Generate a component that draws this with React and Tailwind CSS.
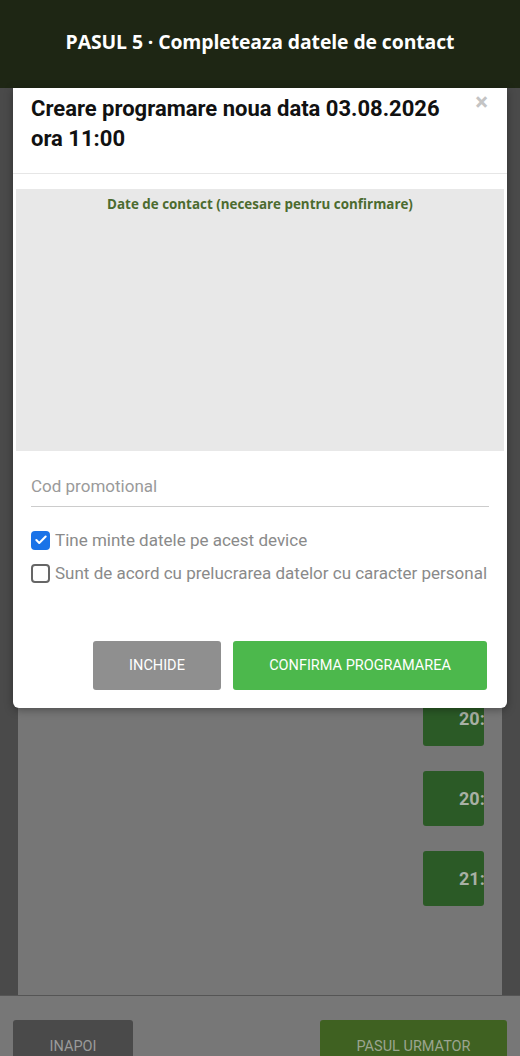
import React from "react";
import { Check } from "lucide-react";

const slots = ["20:00", "20:30", "21:00"];

const App = () => {
  return (
    <div className="relative h-[1056px] w-[520px] overflow-hidden flex flex-col bg-[#4a4a4a] font-['Roboto',sans-serif]">
      {/* Top bar */}
      <div className="h-[88px] shrink-0 bg-[#1e2614] flex items-center justify-center">
        <h1 className="text-white text-[19.4px] font-bold tracking-[-0.1px] font-['Open_Sans',sans-serif] -mt-[4px]">
          PASUL 5 · Completeaza datele de contact
        </h1>
      </div>

      {/* Page behind the dialog (dimmed) */}
      <div className="flex-1 px-[18px] bg-[#4a4a4a] flex">
        <div className="flex-1 bg-[#767676] flex flex-col items-end pr-[18px] pt-[603px] gap-[25px]">
          {slots.map((s) => (
            <div key={s} className="w-[61px] h-[55px] rounded-[3px] bg-[#2b5a26] overflow-hidden flex items-center pl-[36px]">
              <span className="text-[#a8b0a4] text-[18px] font-bold whitespace-nowrap">{s}</span>
            </div>
          ))}
        </div>
      </div>

      {/* Bottom bar */}
      <div className="h-[61px] shrink-0 bg-[#777777] border-t border-[#555555] flex items-start justify-between px-[13px] pt-[24px]">
        <div className="w-[120px] h-[45px] rounded-[3px] bg-[#4a4a4a] flex justify-center pt-[16px]">
          <span className="text-[#9a9a9a] text-[14.5px]">INAPOI</span>
        </div>
        <div className="w-[187px] h-[45px] rounded-[3px] bg-[#3f6121] flex justify-center pt-[16px]">
          <span className="text-[#9ba58f] text-[14.5px]">PASUL URMATOR</span>
        </div>
      </div>

      {/* Dialog */}
      <div className="absolute left-[13px] top-[88px] w-[494px] h-[620px] bg-white rounded-b-[6px] shadow-[0_2px_8px_rgba(0,0,0,0.35)] flex flex-col">
        <div className="relative px-[18px] pt-[6px] pb-[19px] border-b border-[#e6e6e6]">
          <h2 className="text-[#111111] text-[22px] leading-[30px] font-bold pr-[40px]">
            Creare programare noua data 03.08.2026 ora 11:00
          </h2>
          <span className="absolute right-[19px] top-[2px] text-[#c4c4c4] text-[24px] font-bold leading-[24px]">×</span>
        </div>

        <div className="mx-[3px] mt-[15px] h-[262px] bg-[#e8e8e8] flex justify-center pt-[5px]">
          <span className="text-[#4c6b2f] text-[13.4px] font-bold font-['Open_Sans',sans-serif]">
            Date de contact (necesare pentru confirmare)
          </span>
        </div>

        <div className="mx-[18px] mt-[23px] border-b border-[#cccccc] pb-[6px]">
          <span className="text-[#9a9a9a] text-[17px]">Cod promotional</span>
        </div>

        <div className="mx-[18px] mt-[21px] flex flex-col gap-[8px]">
          <label className="flex items-center gap-[5px]">
            <span className="w-[19px] h-[19px] rounded-[4px] bg-[#1a73e8] flex items-center justify-center">
              <Check size={14} strokeWidth={3.5} className="text-white" />
            </span>
            <span className="text-[#8a8a8a] text-[17px]">Tine minte datele pe acest device</span>
          </label>
          <label className="flex items-center gap-[5px]">
            <span className="w-[19px] h-[19px] rounded-[4px] border-2 border-[#666666]" />
            <span className="text-[#8a8a8a] text-[17px] whitespace-nowrap">Sunt de acord cu prelucrarea datelor cu caracter personal</span>
          </label>
        </div>

        <div className="mt-auto mb-[18px] mr-[20px] flex justify-end gap-[12px]">
          <button className="w-[128px] h-[49px] rounded-[3px] bg-[#8f8f8f] text-white text-[14.5px]">INCHIDE</button>
          <button className="w-[254px] h-[49px] rounded-[3px] bg-[#4cb84c] text-white text-[14.5px]">CONFIRMA PROGRAMAREA</button>
        </div>
      </div>
    </div>
  );
};

export default App;
